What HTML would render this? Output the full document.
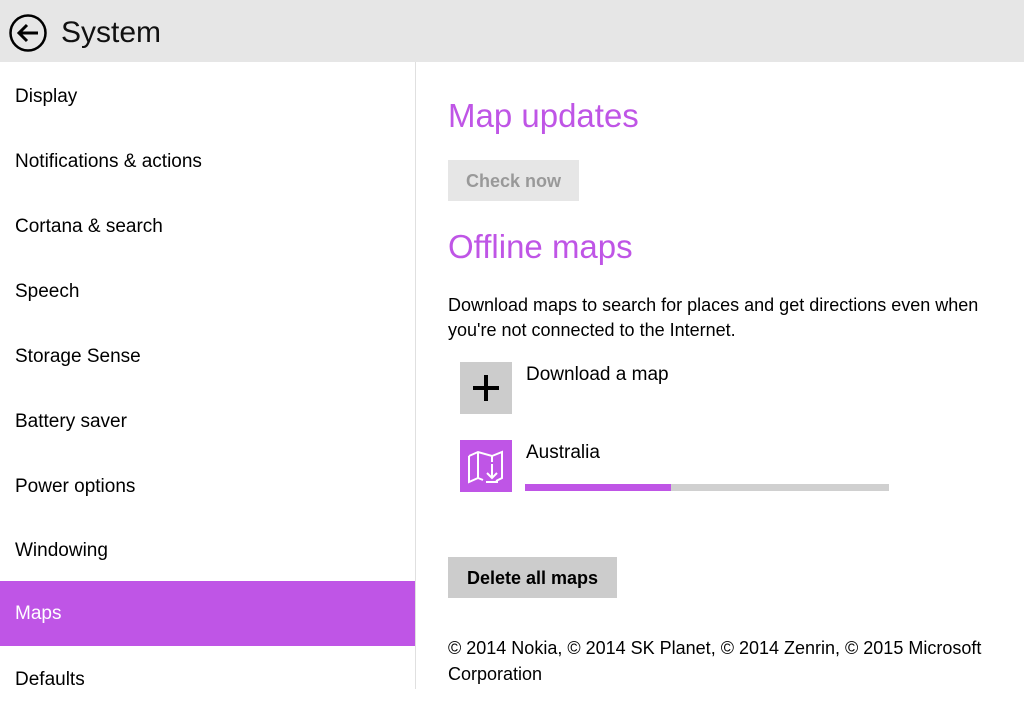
<!DOCTYPE html>
<html><head><meta charset="utf-8"><style>
body{margin:0;width:1024px;height:689px;overflow:hidden;background:#fff;font-family:"Segoe UI","Liberation Sans",sans-serif;color:#000;position:relative}
.hdr{position:absolute;left:0;top:0;width:1024px;height:62px;background:#e6e6e6}
.hdr .t{position:absolute;left:61px;top:16px;font-size:30px;color:#111}
.nav div{position:absolute;left:0;width:415px;height:65px;font-size:19px;line-height:65px;padding-left:15px;box-sizing:border-box}
.sep{position:absolute;left:415px;top:62px;width:1px;height:627px;background:#e0e0e0}
.abs{position:absolute}
.h{color:#bf55e6;font-size:33px;left:448px}
.btn{background:#cccccc;font-size:18px;font-weight:bold;text-align:center}
</style></head><body>
<div class="hdr">
<svg class="abs" style="left:8px;top:13px" width="40" height="40" viewBox="0 0 40 40"><circle cx="20" cy="20" r="17.5" fill="none" stroke="#000" stroke-width="2.5"/><path d="M30 20H11M19 12l-8 8 8 8" fill="none" stroke="#000" stroke-width="3"/></svg>
<div class="t">System</div></div>
<div class="nav">
<div style="top:64px">Display</div>
<div style="top:129px">Notifications &amp; actions</div>
<div style="top:194px">Cortana &amp; search</div>
<div style="top:259px">Speech</div>
<div style="top:324px">Storage Sense</div>
<div style="top:389px">Battery saver</div>
<div style="top:454px">Power options</div>
<div style="top:518px">Windowing</div>
<div style="top:581px;background:#bf55e6;color:#fff">Maps</div>
<div style="top:647px">Defaults</div>
</div>
<div class="sep"></div>
<div class="abs h" style="top:97px">Map updates</div>
<div class="abs btn" style="left:448px;top:160px;width:131px;height:41px;line-height:43px;background:#e6e6e6;color:#999">Check now</div>
<div class="abs h" style="top:228px">Offline maps</div>
<div class="abs" style="left:448px;top:293px;font-size:18px;line-height:25px;width:570px">Download maps to search for places and get directions even when you're not connected to the Internet.</div>
<div class="abs" style="left:460px;top:362px;width:52px;height:52px;background:#cccccc"></div>
<svg class="abs" style="left:460px;top:362px" width="52" height="52"><path d="M26 13v26M13 26h26" stroke="#000" stroke-width="4"/></svg>
<div class="abs" style="left:526px;top:364px;font-size:19px">Download a map</div>
<div class="abs" style="left:460px;top:440px;width:52px;height:52px;background:#bf55e6"></div>
<svg class="abs" style="left:460px;top:440px" width="52" height="52" fill="none" stroke="#fff" stroke-width="2"><path d="M9 16l9-4 14 4 10-4v26l-6 3M9 16v26l9-4v-26M32 16v6M18 38l5 2"/><path d="M32 24v14M27 33l5 5 5-5M26 42h12"/></svg>
<div class="abs" style="left:526px;top:442px;font-size:19px">Australia</div>
<div class="abs" style="left:525px;top:484px;width:364px;height:7px;background:#d0d0d0"></div>
<div class="abs" style="left:525px;top:484px;width:146px;height:7px;background:#bf55e6"></div>
<div class="abs btn" style="left:448px;top:557px;width:169px;height:41px;line-height:43px">Delete all maps</div>
<div class="abs" style="left:448px;top:635px;font-size:18px;line-height:26px;width:570px">© 2014 Nokia, © 2014 SK Planet, © 2014 Zenrin, © 2015 Microsoft Corporation</div>
</body></html>
